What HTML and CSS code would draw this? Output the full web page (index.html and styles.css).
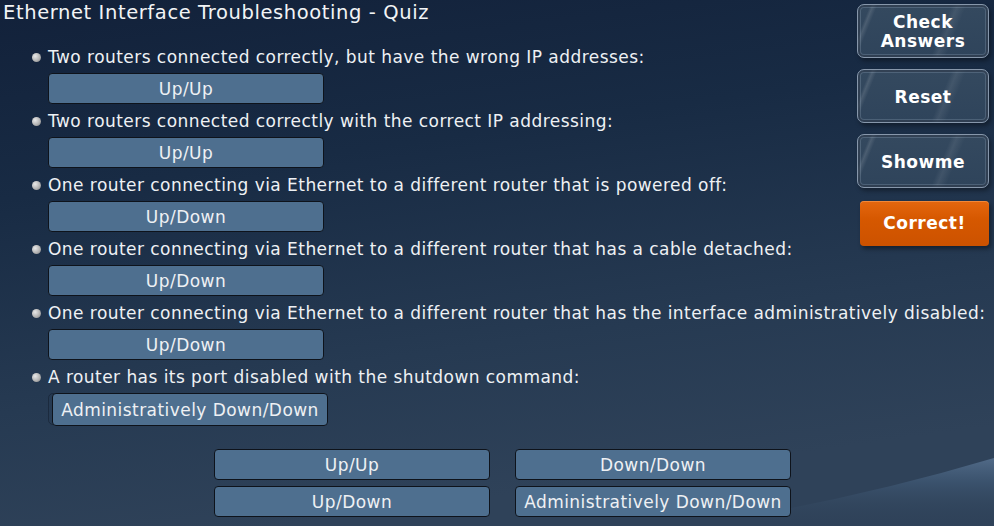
FILE: index.html
```html
<!DOCTYPE html>
<html lang="en">
<head>
<meta charset="utf-8">
<title>Ethernet Interface Troubleshooting - Quiz</title>
<link rel="stylesheet" href="styles.css">
</head>
<body>
<svg class="swoosh" width="994" height="526" viewBox="0 0 994 526" aria-hidden="true">
  <defs>
    <linearGradient id="sw" x1="0" y1="0" x2="0" y2="1">
      <stop offset="0" stop-color="#5a7594" stop-opacity="0.8"/>
      <stop offset="0.35" stop-color="#45607e" stop-opacity="0.55"/>
      <stop offset="1" stop-color="#2f4259" stop-opacity="0"/>
    </linearGradient>
  </defs>
  <path d="M760 514 Q880 492 994 458 L994 526 L760 526 Z" fill="url(#sw)"/>
</svg>
<div class="page">
  <main class="main">
    <h1 class="title">Ethernet Interface Troubleshooting - Quiz</h1>
    <ul class="quiz">
      <li class="item">
        <div class="question"><span class="bullet"></span>Two routers connected correctly, but have the wrong IP addresses:</div>
        <div class="slot"><div class="answer">Up/Up</div></div>
      </li>
      <li class="item">
        <div class="question"><span class="bullet"></span>Two routers connected correctly with the correct IP addressing:</div>
        <div class="slot"><div class="answer">Up/Up</div></div>
      </li>
      <li class="item">
        <div class="question"><span class="bullet"></span>One router connecting via Ethernet to a different router that is powered off:</div>
        <div class="slot"><div class="answer">Up/Down</div></div>
      </li>
      <li class="item">
        <div class="question"><span class="bullet"></span>One router connecting via Ethernet to a different router that has a cable detached:</div>
        <div class="slot"><div class="answer">Up/Down</div></div>
      </li>
      <li class="item">
        <div class="question"><span class="bullet"></span>One router connecting via Ethernet to a different router that has the interface administratively disabled:</div>
        <div class="slot"><div class="answer">Up/Down</div></div>
      </li>
      <li class="item">
        <div class="question"><span class="bullet"></span>A router has its port disabled with the shutdown command:</div>
        <div class="slot slot-ghost"><div class="answer answer-dropped">Administratively Down/Down</div></div>
      </li>
    </ul>
    <div class="bank">
      <div class="answer">Up/Up</div>
      <div class="answer">Down/Down</div>
      <div class="answer">Up/Down</div>
      <div class="answer">Administratively Down/Down</div>
    </div>
  </main>
  <aside class="side">
    <button class="glass">Check<br>Answers</button>
    <button class="glass">Reset</button>
    <button class="glass">Showme</button>
    <button class="feedback">Correct!</button>
  </aside>
</div>
</body>
</html>
```
FILE: styles.css
```css
html, body {
  margin: 0;
  padding: 0;
  width: 994px;
  height: 526px;
  overflow: hidden;
}
body {
  position: relative;
  font-family: "DejaVu Sans", Verdana, sans-serif;
  letter-spacing: 0.45px;
  color: #eef1f4;
  background: linear-gradient(172deg, #12213a 0%, #182b44 30%, #263a52 62%, #2f4259 85%, #2f4259 100%);
}
.swoosh {
  position: absolute;
  left: 0;
  top: 0;
  z-index: 0;
}
.page {
  position: relative;
  z-index: 1;
  display: flex;
  width: 994px;
}
.main {
  flex: none;
  width: 857px;
}
.title {
  margin: 0 0 15px 3px;
  font-size: 19.5px;
  font-weight: normal;
  line-height: 26px;
  letter-spacing: 0.6px;
  color: #f2f4f6;
  white-space: nowrap;
}
.quiz {
  list-style: none;
  margin: 0;
  padding: 0;
}
.item {
  display: flex;
  flex-direction: column;
}
.question {
  display: flex;
  align-items: center;
  height: 32px;
  padding-left: 32px;
  font-size: 17px;
  white-space: nowrap;
  color: #eef1f4;
}
.bullet {
  flex: none;
  width: 9px;
  height: 9px;
  border-radius: 50%;
  margin-right: 7px;
  background: radial-gradient(circle at 35% 35%, #e8e8e8 0%, #b4b4b4 55%, #7d7d7d 100%);
}
.slot {
  margin-left: 48px;
  width: 276px;
  height: 32px;
}
.slot-ghost {
  box-sizing: border-box;
  width: 278px;
  border: 1px solid rgba(10, 15, 25, 0.35);
  border-radius: 5px;
}
.answer {
  box-sizing: border-box;
  width: 276px;
  height: 31px;
  padding-top: 2px;
  border: 1px solid #0e131b;
  border-radius: 4px;
  background: #4e6f8f;
  color: #eef1f4;
  font-size: 17px;
  line-height: 27px;
  text-align: center;
  white-space: nowrap;
}
.answer-dropped {
  margin: -1px 0 0 3px;
  height: 33px;
  line-height: 29px;
  padding-top: 2px;
}
.bank {
  display: grid;
  grid-template-columns: 276px 276px;
  column-gap: 25px;
  row-gap: 6px;
  margin: 24px 0 0 214px;
}
.side {
  flex: none;
  display: flex;
  flex-direction: column;
  width: 132px;
  padding-top: 4px;
}
.glass {
  box-sizing: border-box;
  width: 132px;
  height: 54px;
  margin-bottom: 11px;
  padding: 2px 0 0;
  border: 1px solid #8797ab;
  border-radius: 7px;
  font-family: "DejaVu Sans", Verdana, sans-serif;
  font-weight: bold;
  font-size: 17px;
  line-height: 19px;
  letter-spacing: 0.5px;
  color: #ffffff;
  background:
    linear-gradient(112deg, rgba(255,255,255,0) 0%, rgba(255,255,255,0) 8%, rgba(255,255,255,0.12) 10%, rgba(255,255,255,0) 13%, rgba(255,255,255,0) 62%, rgba(255,255,255,0.08) 66%, rgba(255,255,255,0) 72%),
    linear-gradient(180deg, #34495f 0%, #2f445b 100%);
  box-shadow: inset 0 0 0 2px rgba(15, 25, 40, 0.45), inset 0 0 0 3px rgba(160, 180, 200, 0.25), 2px 3px 4px rgba(0, 0, 0, 0.35);
}
.feedback {
  box-sizing: border-box;
  width: 129px;
  height: 45px;
  margin: 2px 0 0 3px;
  padding: 0 0 2px;
  border: none;
  border-radius: 4px;
  font-family: "DejaVu Sans", Verdana, sans-serif;
  font-weight: bold;
  font-size: 17px;
  letter-spacing: 0.5px;
  color: #ffffff;
  background: linear-gradient(180deg, #e4670f 0%, #d65800 40%, #cc5200 100%);
  box-shadow: 2px 3px 4px rgba(0, 0, 0, 0.4), inset 0 1px 0 rgba(255, 170, 100, 0.5);
}
```
